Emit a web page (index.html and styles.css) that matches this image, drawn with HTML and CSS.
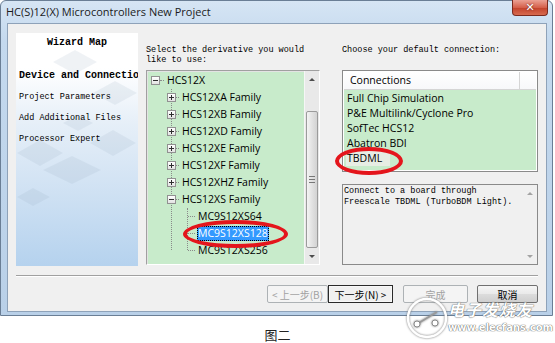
FILE: index.html
```html
<!DOCTYPE html>
<html lang="zh">
<head>
  <meta charset="UTF-8">
  <title>HC(S)12(X) Microcontrollers New Project</title>
  <link rel="stylesheet" href="styles.css">
</head>
<body>
  <div class="window">
    <div class="titlebar">
      <span class="title">HC(S)12(X) Microcontrollers New Project</span>
      <span class="close">&#x2715;</span>
    </div>
    <div class="client">
      <div class="main">
        <!-- левият панел на съветника -->
        <div class="wizard-map">
          <svg class="map-logo" width="122" height="233" viewBox="0 0 122 233">
            <polygon points="37,29 59,17 81,29 59,41"/>
            <polygon points="77,60 99,48 121,60 99,72"/>
            <polygon points="47,90 62,82 77,90 62,98"/>
            <polygon points="74,110 97,97 120,110 97,123"/>
            <polygon points="1,120 24,107 47,120 24,133"/>
            <polygon points="27,137 56,123 85,137 56,151"/>
            <polygon points="1,164 17,155 34,164 17,173"/>
          </svg>
          <div class="map-title">Wizard Map</div>
          <div class="step current">Device and Connections</div>
          <div class="step">Project Parameters</div>
          <div class="step">Add Additional Files</div>
          <div class="step">Processor Expert</div>
        </div>

        <div class="col col-mid">
          <p class="prompt">Select the derivative you would<br>like to use:</p>
          <div class="tree-box">
            <div class="tree">
              <div class="node lvl0"><span class="exp"></span><span class="tick"></span><span class="label">HCS12X</span></div>
              <div class="group g1">
                <div class="node"><span class="exp plus"></span><span class="tick"></span><span class="label">HCS12XA Family</span></div>
                <div class="node"><span class="exp plus"></span><span class="tick"></span><span class="label">HCS12XB Family</span></div>
                <div class="node"><span class="exp plus"></span><span class="tick"></span><span class="label">HCS12XD Family</span></div>
                <div class="node"><span class="exp plus"></span><span class="tick"></span><span class="label">HCS12XE Family</span></div>
                <div class="node"><span class="exp plus"></span><span class="tick"></span><span class="label">HCS12XF Family</span></div>
                <div class="node"><span class="exp plus"></span><span class="tick"></span><span class="label">HCS12XHZ Family</span></div>
                <div class="node"><span class="exp"></span><span class="tick"></span><span class="label">HCS12XS Family</span></div>
                <div class="group g2">
                  <div class="node leaf"><span class="tick"></span><span class="label">MC9S12XS64</span></div>
                  <div class="node leaf"><span class="tick"></span><span class="label selected">MC9S12XS128</span></div>
                  <div class="node leaf"><span class="tick"></span><span class="label">MC9S12XS256</span></div>
                </div>
              </div>
            </div>
            <div class="vscroll">
              <div class="sb-btn"><span class="arr up"></span></div>
              <div class="sb-track"><div class="sb-thumb"><span class="grip"></span></div></div>
              <div class="sb-btn"><span class="arr down"></span></div>
            </div>
          </div>
        </div>

        <div class="col col-right">
          <p class="prompt">Choose your default connection:</p>
          <div class="conn-box">
            <div class="conn-head"><span class="hcol">Connections</span><span class="hrest"></span></div>
            <div class="conn-list">
              <div class="conn">Full Chip Simulation</div>
              <div class="conn">P&amp;E Multilink/Cyclone Pro</div>
              <div class="conn">SofTec HCS12</div>
              <div class="conn">Abatron BDI</div>
              <div class="conn"><span class="picked">TBDML</span></div>
            </div>
          </div>
          <div class="desc-box">
            <div class="desc-text">Connect to a board through<br>Freescale TBDML (TurboBDM Light).</div>
            <div class="vscroll off">
              <div class="sb-btn"><span class="arr up"></span></div>
              <div class="sb-track"></div>
              <div class="sb-btn"><span class="arr down"></span></div>
            </div>
          </div>
        </div>
      </div>

      <div class="separator"></div>

      <div class="buttons">
        <button class="btn back" disabled>&lt; 上一步(B)</button>
        <button class="btn next">下一步(N) &gt;</button>
        <button class="btn finish" disabled>完成</button>
        <button class="btn cancel">取消</button>
      </div>
    </div>
  </div>

  <p class="caption">图二</p>

  <!-- червените маркировки -->
  <div class="ring ring-device"></div>
  <div class="ring ring-conn"></div>

  <div class="watermark">
    <svg class="wm-logo" width="42" height="42" viewBox="0 0 42 42">
      <circle cx="21" cy="21" r="19" fill="none" stroke="#fff" stroke-width="2.5"/>
      <line x1="11" y1="27" x2="31" y2="15" stroke="#9a9a9a" stroke-width="1.5"/>
      <circle cx="11" cy="27" r="3" fill="#fff" stroke="#8a8a8a"/>
      <circle cx="29" cy="26" r="3" fill="#fff" stroke="#8a8a8a"/>
    </svg>
    <div class="wm-name">电子发烧友</div>
    <div class="wm-url">www.elecfans.com</div>
  </div>
</body>
</html>
```

FILE: styles.css
```css
body { margin: 0; background: #fff; font-family: "Open Sans", "Noto Sans CJK SC", sans-serif; color: #000; }

.window {
  width: 553px;
  box-sizing: border-box;
  border: 1px solid #6a7e95;
  border-radius: 6px 6px 0 0;
  background: linear-gradient(#d6e5f4, #c4d9ee 40px, #b9d0e8);
  padding: 0 5px 3px 6px;
}
.titlebar { height: 22px; display: flex; justify-content: space-between; align-items: flex-start; }
.title { font-size: 11px; line-height: 22px; margin-left: -1px; color: #1b1b1b; }
.close {
  width: 36px;
  height: 16px;
  margin: -1px -1px 0 0;
  box-sizing: border-box;
  border: 1px solid #7b2a1e;
  border-top: none;
  border-radius: 0 0 4px 4px;
  background: linear-gradient(#eba194, #d5604b 50%, #c2412a 51%, #d76a4f);
  color: #fff;
  font: bold 11px "DejaVu Sans", sans-serif;
  line-height: 15px;
  text-align: center;
  text-shadow: 0 0 2px #5a1a10;
}

.client { border: 1px solid #8ea2b9; background: #f0f0f0; padding: 9px 8px 8px; }
.main { display: flex; height: 233px; }

/* Wizard Map */
.wizard-map {
  width: 122px;
  position: relative;
  overflow: hidden;
  white-space: nowrap;
  font-family: "Liberation Mono", monospace;
  font-size: 8.5px;
  background: linear-gradient(#ffffff, #ffffff 35px, #e6eff8 90px, #cfe1f3 160px, #b5d2ee);
}
.map-logo { position: absolute; left: 0; top: 0; fill: #8aa0b6; opacity: 0.13; }
.map-title { position: relative; font-weight: bold; font-size: 10px; text-align: center; margin-top: 4px; height: 34px; }
.step { position: relative; padding-left: 3px; height: 21px; line-height: 10px; }
.step.current { font-weight: bold; font-size: 10px; }

.col { display: flex; flex-direction: column; }
.col-mid { width: 174px; margin-left: 8px; padding-top: 12px; }
.col-right { width: 196px; margin-left: 22px; padding-top: 12px; }
.prompt { margin: 0; font-family: "Liberation Mono", monospace; font-size: 8.5px; line-height: 10px; white-space: nowrap; }

/* Tree */
.tree-box {
  margin-top: 5px;
  height: 195px;
  box-sizing: border-box;
  border: 1px solid #a0a0a0;
  border-right-color: #fff;
  border-bottom-color: #fff;
  box-shadow: inset 1px 1px #e3e3e3;
  display: flex;
  background: #c8ebcb;
}
.tree { flex: 1; overflow: hidden; padding-top: 1px; padding-left: 1px; font-size: 10.5px; white-space: nowrap; }
.node { height: 17px; display: flex; align-items: center; }
.lvl0 { padding-left: 3px; }
.exp {
  width: 9px;
  height: 9px;
  box-sizing: border-box;
  border: 1px solid #919191;
  background: linear-gradient(#fff, #e2e2e2);
  position: relative;
  flex: none;
}
.exp::before { content: ""; position: absolute; left: 1px; top: 3px; width: 5px; height: 1px; background: #2e2e2e; }
.exp.plus::after { content: ""; position: absolute; left: 3px; top: 1px; width: 1px; height: 5px; background: #2e2e2e; }
.tick { width: 4px; border-top: 1px dotted #8a8a8a; flex: none; }
.label { margin-left: 2px; line-height: 15px; padding: 0 1px; }
.label.selected { background: #3399ff; color: #fff; outline: 1px dotted #000; outline-offset: -1px; }
.group { border-left: 1px dotted #8a8a8a; }
.g1 { margin-left: 23px; }
.g1 > .node .exp { margin-left: -5px; }
.g1 > .node .tick { width: 3px; }
.g2 { margin-left: 15px; height: 42px; }
.g2 .tick { width: 7px; }

/* Scrollbars */
.vscroll { width: 14px; display: flex; flex-direction: column; background: #e9e9e9; border-left: 1px solid #f6f6f6; }
.sb-btn { height: 16px; display: flex; align-items: center; justify-content: center; }
.arr { width: 0; height: 0; border-left: 3px solid transparent; border-right: 3px solid transparent; }
.arr.up { border-bottom: 3px solid #4d4d4d; }
.arr.down { border-top: 3px solid #4d4d4d; }
.off .arr.up { border-bottom-color: #a3a3a3; }
.off .arr.down { border-top-color: #a3a3a3; }
.sb-track { flex: 1; display: flex; flex-direction: column; }
.sb-thumb {
  flex: 1;
  margin: 24px 1px 0;
  border: 1px solid #9b9b9b;
  border-radius: 2px;
  background: linear-gradient(to right, #f4f4f4, #e2e2e2 50%, #d3d3d3);
  display: flex;
  align-items: center;
  justify-content: center;
}
.grip { width: 6px; height: 5px; border-top: 1px solid #777; border-bottom: 1px solid #777; position: relative; }
.grip::after { content: ""; position: absolute; left: 0; right: 0; top: 2px; border-top: 1px solid #777; }

/* Connections */
.conn-box {
  margin-top: 15px;
  height: 102px;
  box-sizing: border-box;
  border: 1px solid #8a8a8a;
  padding: 1px;
  background: #fff;
  display: flex;
  flex-direction: column;
  font-size: 10.5px;
}
.conn-head { height: 17px; display: flex; border-bottom: 1px solid #d5d5d5; background: linear-gradient(#fff, #f7f8fa); }
.hcol { width: 169px; padding-left: 6px; line-height: 17px; border-right: 1px solid #d5d5d5; }
.hrest { flex: 1; }
.conn-list { flex: 1; background: #c8ebcb; padding: 1px 0 0 3px; }
.conn { height: 15px; line-height: 15px; white-space: nowrap; }
.picked { background: #e7ede4; padding: 0 8px 0 1px; margin-left: -1px; display: inline-block; }

.desc-box {
  margin-top: 12px;
  height: 81px;
  box-sizing: border-box;
  border: 1px solid #8a8a8a;
  background: #f0f0f0;
  display: flex;
}
.desc-text { flex: 1; font-family: "Liberation Mono", monospace; font-size: 8.5px; line-height: 11px; padding: 1px 0 0 1px; white-space: nowrap; }
.off { background: #f0f0f0; border-left: none; }

.separator { margin-top: 9px; border-top: 1px solid #a0a0a0; border-bottom: 1px solid #fff; }

.buttons { display: flex; justify-content: flex-end; margin-top: 8px; }
.btn {
  height: 18px;
  box-sizing: border-box;
  border: 1px solid #707070;
  border-radius: 2px;
  background: linear-gradient(#f6f6f6, #e9e9e9 50%, #dcdcdc 51%, #cfcfcf);
  font: 10px "Noto Sans CJK SC", sans-serif;
  color: #000;
  padding: 0;
}
.btn:disabled { border-color: #adb2b5; background: #f4f4f4; color: #a2a2a2; }
.back { width: 61px; }
.next { width: 65px; border: 1px solid #2a2a2a; border-radius: 0; background: #f0f0f0; box-shadow: inset 0 0 0 1px #f8f8f8; }
.finish { width: 65px; margin-left: 10px; }
.cancel { width: 61px; margin-left: 9px; }

.caption { margin: 12px 0 0; text-align: center; font: 13px "Noto Sans CJK SC", sans-serif; line-height: 14px; color: #222; }

.ring { position: absolute; border: 4px solid #e4151c; border-radius: 50%; box-sizing: border-box; }
.ring-device { left: 183px; top: 220px; width: 105px; height: 28px; }
.ring-conn { left: 335px; top: 147px; width: 68px; height: 28px; }

.watermark { position: absolute; left: 406px; top: 292px; width: 145px; height: 50px; }
.wm-logo { position: absolute; left: 0; top: 5px; filter: drop-shadow(0 0 1px #777); }
.wm-name {
  position: absolute;
  left: 42px;
  top: 5px;
  font: italic bold 16px "Noto Sans CJK SC", sans-serif;
  color: #fff;
  letter-spacing: 1px;
  text-shadow: 0 0 1px #666, 0 0 1px #666;
}
.wm-url {
  position: absolute;
  left: 42px;
  top: 30px;
  font: bold 10px "DejaVu Sans", sans-serif;
  color: #fff;
  text-shadow: 0 0 1px #555, 0 0 1px #555;
}
```
